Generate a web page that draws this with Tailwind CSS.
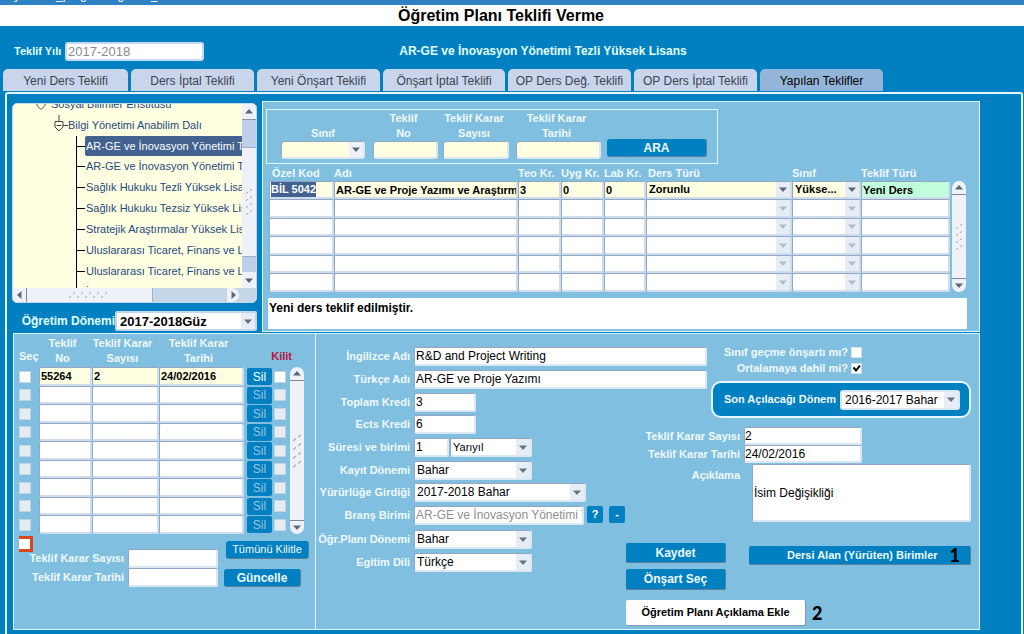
<!DOCTYPE html>
<html lang="tr">
<head>
<meta charset="utf-8">
<title>Öğretim Planı Teklifi Verme</title>
<script src="https://cdn.jsdelivr.net/npm/@tailwindcss/browser@4"></script>
</head>
<body class="flex min-h-screen flex-col overflow-x-hidden bg-[#0080c0] font-['Liberation_Sans',Arial,sans-serif] text-xs text-black">

<svg class="hidden">
  <symbol id="down" viewBox="0 0 8 5"><path d="M0 0.5h8L4 5z" fill="currentColor"/></symbol>
  <symbol id="up" viewBox="0 0 8 5"><path d="M0 4.5h8L4 0z" fill="currentColor"/></symbol>
  <symbol id="left" viewBox="0 0 5 8"><path d="M4.5 0v8L0 4z" fill="currentColor"/></symbol>
  <symbol id="right" viewBox="0 0 5 8"><path d="M0.5 0v8L5 4z" fill="currentColor"/></symbol>
  <symbol id="grip-v" viewBox="0 0 8 28"><path d="M1 6l2-2M5 3l2-2M1 13l2-2M5 10l2-2M1 20l2-2M5 17l2-2M1 27l2-2M5 24l2-2" stroke="#a3adba" fill="none"/></symbol>
  <symbol id="grip-h" viewBox="0 0 44 8"><path d="M1 7l2-2M5 3l2-2M9 7l2-2M13 3l2-2M17 7l2-2M21 3l2-2M25 7l2-2M29 3l2-2M33 7l2-2M37 3l2-2" stroke="#a3adba" fill="none"/></symbol>
</svg>

<div class="h-[5px] overflow-hidden bg-[#2e82c4] text-white"><p class="-mt-[13px] pl-[14px] leading-4">yonetim_program.ogretim_</p></div>
<header>
  <h1 class="flex h-[21px] items-center justify-center bg-white pr-[22px] text-base leading-none font-bold">Öğretim Planı Teklifi Verme</h1>
  <div class="grid h-[43px] grid-cols-[1fr_auto_1fr] items-center pt-[7px] pr-[3px] pl-3.5 font-bold text-[#e0ffff]">
    <div class="flex items-center">
      <label for="yil" class="w-[51px] text-[11px] whitespace-nowrap">Teklif Yılı</label>
      <input id="yil" value="2017-2018" disabled class="h-[19px] w-[139px] rounded-[3px] border-2 border-[#c3daf3] bg-white px-px text-[13px] font-normal text-[#8a8a8a]">
    </div>
    <p class="pl-[51px]">AR-GE ve İnovasyon Yönetimi Tezli Yüksek Lisans</p>
  </div>
</header>

<nav class="flex h-[22px] gap-[3px] pl-[3px] text-center text-[#3a4450]">
  <button class="w-[125px] rounded-t-[5px] bg-[#c9d5eb] pt-[2px]">Yeni Ders Teklifi</button>
  <button class="w-[123px] rounded-t-[5px] bg-[#c9d5eb] pt-[2px]">Ders İptal Teklifi</button>
  <button class="w-[123px] rounded-t-[5px] bg-[#c9d5eb] pt-[2px]">Yeni Önşart Teklifi</button>
  <button class="w-[122px] rounded-t-[5px] bg-[#c9d5eb] pt-[2px]">Önşart İptal Teklifi</button>
  <button class="w-[123px] rounded-t-[5px] bg-[#c9d5eb] pt-[2px]">OP Ders Değ. Teklifi</button>
  <button class="w-[123px] rounded-t-[5px] bg-[#c9d5eb] pt-[2px]">OP Ders İptal Teklifi</button>
  <button class="w-[123px] rounded-t-[5px] bg-[#94b5da] pt-[2px] text-black">Yapılan Teklifler</button>
</nav>

<main class="mt-px mr-px ml-[5px] flex-1 rounded-t-[3px] border-2 border-b-0 border-[#e4f4ff] pt-[7px] pr-[41px] pb-[4px] pl-[5px]">
  <div class="flex gap-[5px]">
    <!-- Programme tree and term -->
    <section class="w-[245px] flex-none pt-[2px]">
      <div class="flex h-[200px] flex-col overflow-hidden rounded-[5px] border border-[#c3d5ea] bg-[#ffffe1]">
        <div class="flex min-h-0 flex-1">
          <ul class="-mt-[10px] min-w-0 flex-1 overflow-hidden text-[11px] leading-[21px] whitespace-nowrap text-[#1f4a80]">
            <li class="flex h-[21px] items-center gap-[5px] pl-[23px]">
              <svg class="h-3 w-2.5 flex-none" viewBox="0 0 10 12" fill="none" stroke="#555"><path d="M1 1.500h8v5L5 10.500 1 6.500z"/></svg>
              Sosyal Bilimler Enstitüsü
            </li>
            <li class="flex h-[21px] items-center pl-[41px]">
              <svg class="h-[21px] w-3.5 flex-none" viewBox="0 0 14 21" fill="none" stroke="#444"><path d="M5 0v6M1 6.500h8v5.500l-4 4-4-4zM2.500 10.500h5M9 10.500h5"/></svg>
              Bilgi Yönetimi Anabilim Dalı
            </li>
            <li><ul class="ml-[63px] border-l border-black">
              <li class="flex items-center"><span class="w-2 flex-none border-t border-black"></span><span class="h-[20px] flex-1 rounded-l-[2px] bg-[#43628f] pl-px leading-[20px] text-white">AR-GE ve İnovasyon Yönetimi Tezli</span></li>
              <li class="flex items-center gap-px"><span class="w-2 flex-none border-t border-black"></span>AR-GE ve İnovasyon Yönetimi Tezsiz</li>
              <li class="flex items-center gap-px"><span class="w-2 flex-none border-t border-black"></span>Sağlık Hukuku Tezli Yüksek Lisans</li>
              <li class="flex items-center gap-px"><span class="w-2 flex-none border-t border-black"></span>Sağlık Hukuku Tezsiz Yüksek Lisans</li>
              <li class="flex items-center gap-px"><span class="w-2 flex-none border-t border-black"></span>Stratejik Araştırmalar Yüksek Lisans</li>
              <li class="flex items-center gap-px"><span class="w-2 flex-none border-t border-black"></span>Uluslararası Ticaret, Finans ve Lojistik</li>
              <li class="flex items-center gap-px"><span class="w-2 flex-none border-t border-black"></span>Uluslararası Ticaret, Finans ve Lojistik</li>
              <li class="flex items-center gap-px"><span class="w-2 flex-none border-t border-black"></span>İş Sağlığı ve Güvenliği</li>
            </ul></li>
          </ul>
          <div class="flex w-3.5 flex-none flex-col items-center bg-[#bed0e8] text-[#5a6678]">
            <div class="flex h-4 w-full items-center justify-center border-b border-[#8a97a8] bg-[#eef2f8]"><svg class="h-[5px] w-2"><use href="#up"/></svg></div>
            <div class="mt-[27px] flex w-full flex-1 items-center justify-center border-y border-[#9fb0c8] bg-[#eef2f8]"><svg class="h-7 w-2"><use href="#grip-v"/></svg></div>
            <div class="mt-[15px] flex h-4 w-full items-center justify-center bg-[#eef2f8]"><svg class="h-[5px] w-2"><use href="#down"/></svg></div>
          </div>
        </div>
        <div class="flex h-3.5 flex-none items-center bg-[#c5d6e8] text-[#5a6678]">
          <div class="flex h-full w-3.5 items-center justify-center border-r border-[#7d8999] bg-[#eef2f8]"><svg class="h-2 w-[5px]"><use href="#left"/></svg></div>
          <div class="flex h-full w-[126px] items-center justify-center border-r border-[#9fb0c8] bg-[#eef2f8]"><svg class="h-2 w-11"><use href="#grip-h"/></svg></div>
          <div class="mr-[17px] ml-auto flex h-full w-3 items-center justify-center rounded-r-full bg-[#eef2f8]"><svg class="h-2 w-[5px]"><use href="#right"/></svg></div>
        </div>
      </div>
      <div class="mt-2 flex items-center justify-end">
        <label for="donem" class="font-bold text-[#e0ffff]">Öğretim Dönemi</label>
        <span class="relative block h-5 w-[142px]">
          <select id="donem" class="h-full w-full appearance-none rounded-[2px] border-2 border-[#c3d5ea] bg-white pl-[3px] text-[13px] font-bold"><option>2017-2018Güz</option></select>
          <span class="pointer-events-none absolute inset-y-[2px] right-[2px] flex w-3.5 items-center justify-center bg-[#e6edf6] text-[#66727f]"><svg class="h-[5px] w-2"><use href="#down"/></svg></span>
        </span>
      </div>
    </section>

    <!-- Search and proposal list -->
    <section class="min-w-0 flex-1 border border-[#dcf6ff] bg-[#80bfdf] pt-[7px] pb-[2px] pl-[3px]">
      <form class="flex h-[55px] w-[452px] items-end border border-[#dcf6ff] pb-[4px] pl-3.5 text-center text-[11px] leading-[15px] font-bold text-[#effaff]">
        <label class="w-[84px]">Sınıf
          <span class="relative block h-[18px]">
            <select class="h-full w-full appearance-none rounded-[3px] border-t border-r-2 border-b-2 border-l border-t-[#93a6c2] border-r-[#dbe7f3] border-b-[#dbe7f3] border-l-[#93a6c2] bg-[#ffffe1]"><option></option></select>
            <span class="pointer-events-none absolute top-px right-[2px] bottom-[2px] flex w-3.5 items-center justify-center bg-[#eef2f8] text-[#5a6678]"><svg class="h-[5px] w-2"><use href="#down"/></svg></span>
          </span>
        </label>
        <label class="ml-2 w-[65px]"><span class="block pr-1">Teklif<br>No</span>
          <input class="block h-[18px] w-full rounded-[3px] border-t border-r-2 border-b-2 border-l border-t-[#93a6c2] border-r-[#dbe7f3] border-b-[#dbe7f3] border-l-[#93a6c2] bg-[#ffffe1]">
        </label>
        <label class="ml-[5px] w-[66px]"><span class="block pr-1">Teklif Karar<br>Sayısı</span>
          <input class="block h-[18px] w-full rounded-[3px] border-t border-r-2 border-b-2 border-l border-t-[#93a6c2] border-r-[#dbe7f3] border-b-[#dbe7f3] border-l-[#93a6c2] bg-[#ffffe1]">
        </label>
        <label class="ml-[7px] w-[85px]"><span class="block pr-1">Teklif Karar<br>Tarihi</span>
          <input class="block h-[18px] w-full rounded-[3px] border-t border-r-2 border-b-2 border-l border-t-[#93a6c2] border-r-[#dbe7f3] border-b-[#dbe7f3] border-l-[#93a6c2] bg-[#ffffe1]">
        </label>
        <button type="button" class="mb-[2px] ml-1.5 h-[18px] w-[100px] rounded-[3px] border-r border-b border-[#5a7f9c] bg-[#0080c0] text-xs leading-none">ARA</button>
      </form>

      <div class="flex items-start gap-[2px] pr-[13px] pl-[3px]">
        <table class="min-w-0 flex-1 table-fixed border-separate border-spacing-0 text-[11px] font-bold">
          <colgroup><col class="w-[65px]"><col><col class="w-[43px]"><col class="w-[43px]"><col class="w-[42px]"><col class="w-[146px]"><col class="w-[69px]"><col class="w-[89px]"></colgroup>
          <thead>
            <tr class="h-[17px] text-left leading-[13px] whitespace-nowrap text-[#effaff]">
              <th class="p-0 pt-[2px] pl-[3px]">Özel Kod</th><th class="p-0 pt-[2px]">Adı</th><th class="p-0 pt-[2px]">Teo Kr.</th><th class="p-0 pt-[2px]">Uyg Kr.</th><th class="p-0 pt-[2px]">Lab Kr.</th><th class="p-0 pt-[2px] pl-[2px]">Ders Türü</th><th class="p-0 pt-[2px]">Sınıf</th><th class="p-0 pt-[2px]">Teklif Türü</th>
            </tr>
          </thead>
          <tbody id="dersler"></tbody>
        </table>
        <div class="mt-[17px] flex h-[111px] w-3.5 flex-none flex-col items-center rounded-full bg-[#eef2f8] text-[#5a6678]">
          <div class="flex h-3.5 w-full items-center justify-center border-b border-[#7d8999]"><svg class="h-[5px] w-2"><use href="#up"/></svg></div>
          <div class="flex flex-1 items-center"><svg class="h-7 w-2"><use href="#grip-v"/></svg></div>
          <div class="flex h-3.5 w-full items-center justify-center border-t border-[#7d8999]"><svg class="h-[5px] w-2"><use href="#down"/></svg></div>
        </div>
      </div>
      <p class="mt-1.5 mr-3 ml-[2px] h-[31px] bg-white pt-[2px] pl-px leading-4 font-bold">Yeni ders teklif edilmiştir.</p>
    </section>
  </div>

  <div class="mt-px ml-px flex min-h-[297px] border border-[#dcf6ff] bg-[#80bfdf]">
    <!-- Decisions -->
    <section class="w-[301px] flex-none pl-[5px] font-bold text-[#effaff]">
      <div class="flex items-start">
        <table class="w-[269px] table-fixed border-separate border-spacing-0 text-[11px]">
          <colgroup><col class="w-5"><col class="w-[53px]"><col class="w-[67px]"><col class="w-[85px]"><col class="w-[29px]"><col class="w-[15px]"></colgroup>
          <thead>
            <tr class="h-[33px] leading-[15px] whitespace-nowrap">
              <th class="p-0 pb-[3px] text-left align-bottom">Seç</th><th class="p-0 pr-1.5 pb-px align-bottom">Teklif<br>No</th><th class="p-0 pr-1.5 pb-px align-bottom">Teklif Karar<br>Sayısı</th><th class="p-0 pr-1.5 pb-px align-bottom">Teklif Karar<br>Tarihi</th><th colspan="2" class="p-0 pr-[2px] pb-[3px] text-right align-bottom text-[#b8143c]"><span class="-mr-1.5">Kilit</span></th>
            </tr>
          </thead>
          <tbody id="kararlar" class="text-black"></tbody>
        </table>
        <div class="mt-[33px] ml-[2px] flex h-[167px] w-3.5 flex-none flex-col items-center rounded-full bg-[#eef2f8] text-[#5a6678]">
          <div class="flex h-3.5 w-full items-center justify-center border-b border-[#7d8999]"><svg class="h-[5px] w-2"><use href="#up"/></svg></div>
          <div class="flex flex-1 items-center"><svg class="h-9 w-2.5"><use href="#grip-v"/></svg></div>
          <div class="flex h-3.5 w-full items-center justify-center border-t border-[#7d8999]"><svg class="h-[5px] w-2"><use href="#down"/></svg></div>
        </div>
      </div>
      <div class="flex">
        <div class="w-[199px]">
          <span class="mt-[2px] block h-4 w-3.5 border-3 border-l-0 border-[#d9481c]"><input type="checkbox" aria-label="Tümünü seç" class="block h-2.5 w-[11px] appearance-none bg-white"></span>
          <div class="-mt-[3px] grid grid-cols-[1fr_90px] items-center gap-x-[4px] text-right text-[11px]">
            <label for="ks">Teklif Karar Sayısı</label>
            <input id="ks" class="h-[19px] w-full rounded-[2px] border-t border-r-2 border-b-2 border-l border-t-[#93a6c2] border-r-[#dbe7f3] border-b-[#dbe7f3] border-l-[#93a6c2] bg-white">
            <label for="kt">Teklif Karar Tarihi</label>
            <input id="kt" class="h-[19px] w-full rounded-[2px] border-t border-r-2 border-b-2 border-l border-t-[#93a6c2] border-r-[#dbe7f3] border-b-[#dbe7f3] border-l-[#93a6c2] bg-white">
          </div>
        </div>
        <div class="mt-[7px] ml-[6px] flex flex-col gap-[10px]">
          <button class="ml-[2px] h-[18px] w-[83px] rounded-[3px] border-r border-b border-[#5a7f9c] bg-[#0080c0] text-[11px] leading-none font-normal">Tümünü Kilitle</button>
          <button class="h-[18px] w-[77px] rounded-[3px] border-r border-b border-[#5a7f9c] bg-[#0080c0] leading-none">Güncelle</button>
        </div>
      </div>
    </section>

    <!-- Course details -->
    <form class="flex flex-1 border-l border-[#dcf6ff] pt-[10px]">
      <div class="w-[310px] flex-none pt-[3px] [&>div]:flex [&_label]:mr-1 [&_label]:w-[94px] [&_label]:flex-none [&_label]:text-right [&_label]:text-[11px] [&_label]:leading-[19px] [&_label]:font-bold [&_label]:whitespace-nowrap [&_label]:text-[#effaff] [&_input]:h-[19px] [&_input]:flex-none [&_input]:rounded-[2px] [&_input]:border-t [&_input]:border-l [&_input]:border-r-2 [&_input]:border-b-2 [&_input]:border-t-[#93a6c2] [&_input]:border-l-[#93a6c2] [&_input]:border-r-[#dbe7f3] [&_input]:border-b-[#dbe7f3] [&_input]:bg-white [&_input]:pl-px [&_select]:h-full [&_select]:w-full [&_select]:appearance-none [&_select]:rounded-[2px] [&_select]:border-t [&_select]:border-l [&_select]:border-r-2 [&_select]:border-b-2 [&_select]:border-t-[#93a6c2] [&_select]:border-l-[#93a6c2] [&_select]:border-r-[#dbe7f3] [&_select]:border-b-[#dbe7f3] [&_select]:bg-white [&_select]:pl-[2px]">
        <div class="h-[23px]"><label for="f1">İngilizce Adı</label><input id="f1" class="w-[293px]" value="R&amp;D and Project Writing"></div>
        <div class="h-[23px]"><label for="f2">Türkçe Adı</label><input id="f2" class="w-[293px]" value="AR-GE ve Proje Yazımı"></div>
        <div class="h-[22px]"><label for="f3">Toplam Kredi</label><input id="f3" class="w-[62px]" value="3"></div>
        <div class="h-[23px]"><label for="f4">Ects Kredi</label><input id="f4" class="w-[62px]" value="6"></div>
        <div class="h-[23px]"><label for="f5">Süresi ve birimi</label><input id="f5" class="mr-px w-[35px]" value="1">
          <span class="relative block h-[19px] w-[82px]"><select aria-label="Birim" class="text-[11px]"><option>Yarıyıl</option></select><span class="pointer-events-none absolute top-px right-[2px] bottom-[2px] flex w-3.5 items-center justify-center bg-[#e6edf6] text-[#66727f]"><svg class="h-[5px] w-2"><use href="#down"/></svg></span></span></div>
        <div class="h-[22px]"><label for="f6">Kayıt Dönemi</label>
          <span class="relative block h-[19px] w-[118px]"><select id="f6"><option>Bahar</option></select><span class="pointer-events-none absolute top-px right-[2px] bottom-[2px] flex w-3.5 items-center justify-center bg-[#e6edf6] text-[#66727f]"><svg class="h-[5px] w-2"><use href="#down"/></svg></span></span></div>
        <div class="h-[23px]"><label for="f7">Yürürlüğe Girdiği</label>
          <span class="relative block h-[19px] w-[172px]"><select id="f7"><option>2017-2018 Bahar</option></select><span class="pointer-events-none absolute top-px right-[2px] bottom-[2px] flex w-3.5 items-center justify-center bg-[#e6edf6] text-[#66727f]"><svg class="h-[5px] w-2"><use href="#down"/></svg></span></span></div>
        <div class="h-6"><label for="f8">Branş Birimi</label><input id="f8" disabled class="w-[170px] text-[#8f8f8f]" value="AR-GE ve İnovasyon Yönetimi Tezli">
          <button type="button" class="ml-[3px] h-[17px] w-4 rounded-[2px] bg-[#0080c0] text-[11px] leading-none font-bold text-white">?</button>
          <button type="button" class="ml-[6px] h-[17px] w-4 rounded-[2px] bg-[#0080c0] text-[11px] leading-none font-bold text-white">-</button></div>
        <div class="h-[23px]"><label for="f9">Öğr.Planı Dönemi</label>
          <span class="relative block h-[19px] w-[118px]"><select id="f9"><option>Bahar</option></select><span class="pointer-events-none absolute top-px right-[2px] bottom-[2px] flex w-3.5 items-center justify-center bg-[#e6edf6] text-[#66727f]"><svg class="h-[5px] w-2"><use href="#down"/></svg></span></span></div>
        <div class="h-[23px]"><label for="f10">Egitim Dili</label>
          <span class="relative block h-[19px] w-[118px]"><select id="f10"><option>Türkçe</option></select><span class="pointer-events-none absolute top-px right-[2px] bottom-[2px] flex w-3.5 items-center justify-center bg-[#e6edf6] text-[#66727f]"><svg class="h-[5px] w-2"><use href="#down"/></svg></span></span></div>
      </div>

      <div class="min-w-0 flex-1 pr-2 text-[11px] font-bold whitespace-nowrap text-[#effaff]">
        <div class="w-[236px] leading-4">
          <label class="flex items-center justify-end gap-[3px] text-[11px] leading-4">Sınıf geçme önşartı mı?<input type="checkbox" class="h-[11px] w-[11px] appearance-none border border-[#d5e2ee] bg-white"></label>
          <label class="flex items-center justify-end gap-[3px] text-[11px] leading-4">Ortalamaya dahil mi?
            <span class="relative block h-[11px] w-[11px]"><input type="checkbox" checked class="block h-[11px] w-[11px] appearance-none border border-[#d5e2ee] bg-white"><svg class="pointer-events-none absolute inset-0 h-[11px] w-[11px]" viewBox="0 0 11 11" fill="none" stroke="#000" stroke-width="2"><path d="M2.500 4.500l2.500 3 4-5"/></svg></span></label>
        </div>
        <div class="mt-[5px] ml-[85px] flex h-[37px] items-center justify-end gap-1 rounded-[10px] border-2 border-[#e4f8ff] bg-[#0080c0] pr-[9px]">
          <label for="son">Son Açılacağı Dönem</label>
          <span class="relative block h-5 w-[120px] text-xs font-normal text-black"><select id="son" class="h-full w-full appearance-none rounded-[3px] border-2 border-[#dbe7f3] bg-white pl-[3px]"><option>2016-2017 Bahar</option></select><span class="pointer-events-none absolute inset-y-[2px] right-[2px] flex w-3.5 items-center justify-center bg-[#e6edf6] text-[#66727f]"><svg class="h-[5px] w-2"><use href="#down"/></svg></span></span>
        </div>
        <div class="mt-[9px] grid grid-cols-[114px_118px] items-center gap-x-1 text-right">
          <label for="k2">Teklif Karar Sayısı</label>
          <input id="k2" value="2" class="h-[18px] w-full rounded-[2px] border-t border-r-2 border-b-2 border-l border-t-[#93a6c2] border-r-[#dbe7f3] border-b-[#dbe7f3] border-l-[#93a6c2] bg-white text-xs font-normal text-black">
          <label for="k3">Teklif Karar Tarihi</label>
          <input id="k3" value="24/02/2016" class="h-[18px] w-full rounded-[2px] border-t border-r-2 border-b-2 border-l border-t-[#93a6c2] border-r-[#dbe7f3] border-b-[#dbe7f3] border-l-[#93a6c2] bg-white text-xs font-normal text-black">
        </div>
        <div class="mt-px flex gap-3">
          <label for="acik" class="w-[114px] flex-none pt-1 text-right">Açıklama</label>
          <textarea id="acik" class="h-[58px] min-w-0 flex-1 resize-none rounded-[2px] border-t border-r-2 border-b-2 border-l border-t-[#93a6c2] border-r-[#dbe7f3] border-b-[#dbe7f3] border-l-[#93a6c2] bg-white pt-5 pl-px text-xs font-normal text-black">İsim Değişikliği</textarea>
        </div>
        <div class="mt-[21px] flex gap-[23px]">
          <div class="flex w-[100px] flex-none flex-col gap-[6px] text-xs">
            <button type="button" class="h-5 rounded-[2px] border-r border-b border-[#5a7f9c] bg-[#0080c0] leading-none">Kaydet</button>
            <button type="button" class="h-[21px] rounded-[2px] border-r border-b border-[#5a7f9c] bg-[#0080c0] leading-none">Önşart Seç</button>
          </div>
          <button type="button" class="mt-[3px] flex h-[19px] flex-1 items-center justify-end gap-3 rounded-[2px] border-r border-b border-[#5a7f9c] bg-[#0080c0] pr-2.5 leading-none">Dersi Alan (Yürüten) Birimler <span class="font-[Lato,sans-serif] text-lg leading-none font-black text-black">1</span></button>
        </div>
        <div class="mt-[10px] flex items-center gap-1.5">
          <button type="button" class="h-[26px] w-[180px] rounded-[2px] border-r border-b border-[#7f97ab] bg-white text-[11px] text-black">Öğretim Planı Açıklama Ekle</button>
          <span class="font-[Lato,sans-serif] text-lg leading-none font-black text-black">2</span>
        </div>
      </div>
    </form>
  </div>
</main>

<template id="ders-satiri">
  <tr class="odd:h-[18px] even:h-[19px] [&_td]:h-[inherit] [&_td]:p-0 [&_input]:block [&_input]:h-full [&_input]:w-full [&_input]:rounded-[2px] [&_input]:border-t [&_input]:border-l [&_input]:border-r-2 [&_input]:border-b-2 [&_input]:border-t-[#93a6c2] [&_input]:border-l-[#93a6c2] [&_input]:border-r-[#cfdcec] [&_input]:border-b-[#cfdcec] [&_input]:pl-px [&_select]:block [&_select]:h-full [&_select]:w-full [&_select]:appearance-none [&_select]:rounded-[2px] [&_select]:border-t [&_select]:border-l [&_select]:border-r-2 [&_select]:border-b-2 [&_select]:border-t-[#93a6c2] [&_select]:border-l-[#93a6c2] [&_select]:border-r-[#cfdcec] [&_select]:border-b-[#cfdcec] [&_select]:pl-[2px]">
    <td><input aria-label="Özel Kod"></td><td><input aria-label="Adı"></td><td><input aria-label="Teo Kr."></td><td><input aria-label="Uyg Kr."></td><td><input aria-label="Lab Kr."></td>
    <td><span class="relative block h-full"><select aria-label="Ders Türü"><option></option></select><span class="pointer-events-none absolute top-px right-[2px] bottom-[2px] flex w-3.5 items-center justify-center bg-[#e6edf6]"><svg class="h-[5px] w-2"><use href="#down"/></svg></span></span></td>
    <td><span class="relative block h-full"><select aria-label="Sınıf"><option></option></select><span class="pointer-events-none absolute top-px right-[2px] bottom-[2px] flex w-3.5 items-center justify-center bg-[#e6edf6]"><svg class="h-[5px] w-2"><use href="#down"/></svg></span></span></td>
    <td><input aria-label="Teklif Türü"></td>
  </tr>
</template>
<template id="karar-satiri">
  <tr class="odd:h-[19px] even:h-[18px] [&_td]:h-[inherit] [&_td]:p-0">
    <td><input type="checkbox" aria-label="Seç" class="block h-3 w-3 appearance-none border border-[#c2d3e2]"></td>
    <td><input type="text" aria-label="Teklif No" class="block h-full w-full rounded-[2px] border-t border-r-2 border-b-2 border-l border-t-[#93a6c2] border-r-[#cfdcec] border-b-[#cfdcec] border-l-[#93a6c2] pl-px"></td>
    <td><input type="text" aria-label="Teklif Karar Sayısı" class="block h-full w-full rounded-[2px] border-t border-r-2 border-b-2 border-l border-t-[#93a6c2] border-r-[#cfdcec] border-b-[#cfdcec] border-l-[#93a6c2] pl-px"></td>
    <td><input type="text" aria-label="Teklif Karar Tarihi" class="block h-full w-full rounded-[2px] border-t border-r-2 border-b-2 border-l border-t-[#93a6c2] border-r-[#cfdcec] border-b-[#cfdcec] border-l-[#93a6c2] pl-px"></td>
    <td><button class="ml-[3px] block h-[17px] w-[25px] rounded-[2px] bg-[#0080c0] text-xs leading-none font-normal">Sil</button></td>
    <td><input type="checkbox" aria-label="Kilit" class="ml-px block h-3 w-3 appearance-none border border-[#c2d3e2]"></td>
  </tr>
</template>
<script>
  const dersler = document.getElementById('dersler');
  const ilk = ['BİL 5042', 'AR-GE ve Proje Yazımı ve Araştırma', '3', '0', '0', 'Zorunlu', 'Yükse...', 'Yeni Ders'];
  for (let i = 0; i < 6; i++) {
    const tr = document.getElementById('ders-satiri').content.cloneNode(true).querySelector('tr');
    tr.querySelectorAll('input, select').forEach((el, j) => {
      el.classList.add(i ? 'bg-white' : j === 7 ? 'bg-[#c1ffdc]' : 'bg-[#ffffe1]');
      if (!i) { if (el.tagName === 'SELECT') el.options[0].text = ilk[j]; else el.value = ilk[j]; }
      if (!i && j === 0) {
        const kod = document.createElement('div');
        kod.className = 'h-full rounded-[2px] border-t border-l border-r-2 border-b-2 border-t-[#93a6c2] border-l-[#93a6c2] border-r-[#cfdcec] border-b-[#cfdcec] bg-[#ffffe1] pl-px leading-[15px]';
        kod.innerHTML = '<span class="inline-block bg-[#43628f] text-white">BİL 5042</span>';
        el.replaceWith(kod);
      }
    });
    tr.querySelectorAll('svg').forEach(s => s.classList.add(i ? 'text-[#b4bcc6]' : 'text-[#5a6678]'));
    dersler.append(tr);
  }
  const kararlar = document.getElementById('kararlar');
  const karar = ['55264', '2', '24/02/2016'];
  for (let i = 0; i < 9; i++) {
    const tr = document.getElementById('karar-satiri').content.cloneNode(true).querySelector('tr');
    tr.querySelectorAll('input[type=text]').forEach((el, j) => {
      el.classList.add(i ? 'bg-white' : 'bg-[#ffffe1]');
      if (!i) el.value = karar[j];
    });
    tr.querySelectorAll('input[type=checkbox]').forEach(el => el.classList.add(i ? 'bg-[#e4ebf1]' : 'bg-white'));
    tr.querySelector('button').classList.add(i ? 'text-[#9cc4de]' : 'text-white');
    kararlar.append(tr);
  }
</script>
</body>
</html>
